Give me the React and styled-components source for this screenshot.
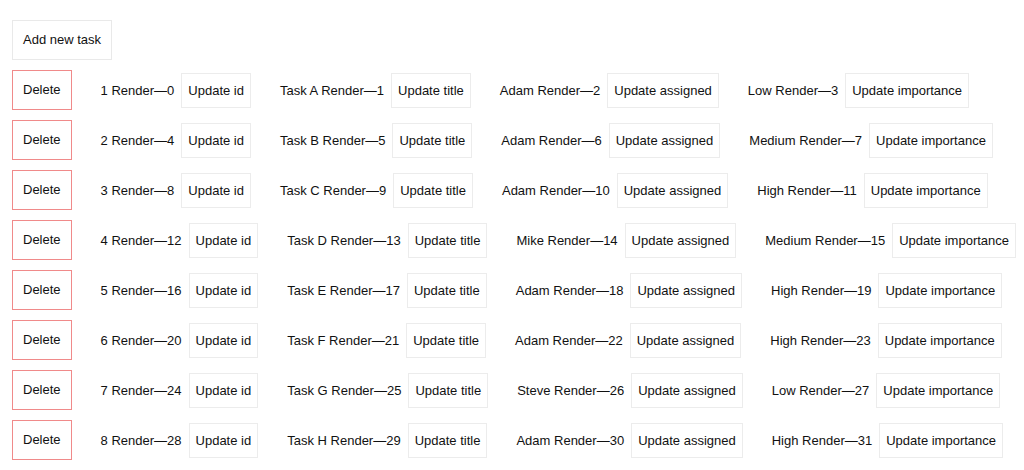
import React from 'react';
import styled, { createGlobalStyle } from 'styled-components';

const GlobalStyle = createGlobalStyle`
    body {
        margin: 0;
        background: #fff;
        font-family: "Liberation Sans", Arial, sans-serif;
        color: #111;
    }
`
const SPage = styled.div`
    padding: 20px 12px;
`
const SButton = styled.button`
    font-family: inherit;
    font-size: 13px;
    line-height: 18px;
    color: #111;
    background: #fff;
    border: 1px solid ${props => props.danger ? '#f08a8a' : '#e9e9e9'};
    padding: 10px;
    white-space: nowrap;
    flex-shrink: 0;
    cursor: pointer;
`
const SSmallButton = styled(SButton)`
    padding: 8px 6px;
    line-height: 17px;
    border-color: #ececec;
`
const SRow = styled.div`
    display: flex;
    align-items: center;
    margin-top: 10px;
`
const SCell = styled.div`
    display: flex;
    align-items: center;
    flex-shrink: 0;
    margin-left: 29px;
`
const SLabel = styled.span`
    font-size: 13px;
    white-space: nowrap;
    margin-right: 7px;
`

const tasks = [
    { id: 1, title: 'Task A', assigned: 'Adam', importance: 'Low' },
    { id: 2, title: 'Task B', assigned: 'Adam', importance: 'Medium' },
    { id: 3, title: 'Task C', assigned: 'Adam', importance: 'High' },
    { id: 4, title: 'Task D', assigned: 'Mike', importance: 'Medium' },
    { id: 5, title: 'Task E', assigned: 'Adam', importance: 'High' },
    { id: 6, title: 'Task F', assigned: 'Adam', importance: 'High' },
    { id: 7, title: 'Task G', assigned: 'Steve', importance: 'Low' },
    { id: 8, title: 'Task H', assigned: 'Adam', importance: 'High' },
]

const fields = ['id', 'title', 'assigned', 'importance']

const App = () => {
    return (
        <React.Fragment>
            <GlobalStyle />
            <SPage>
                <SButton>Add new task</SButton>
                {tasks.map((task, i) => (
                    <SRow key={task.id}>
                        <SButton danger>Delete</SButton>
                        {fields.map((field, j) => (
                            <SCell key={field}>
                                <SLabel>{task[field]} Render—{i * 4 + j}</SLabel>
                                <SSmallButton>Update {field}</SSmallButton>
                            </SCell>
                        ))}
                    </SRow>
                ))}
            </SPage>
        </React.Fragment>
    );
}

export default App;
